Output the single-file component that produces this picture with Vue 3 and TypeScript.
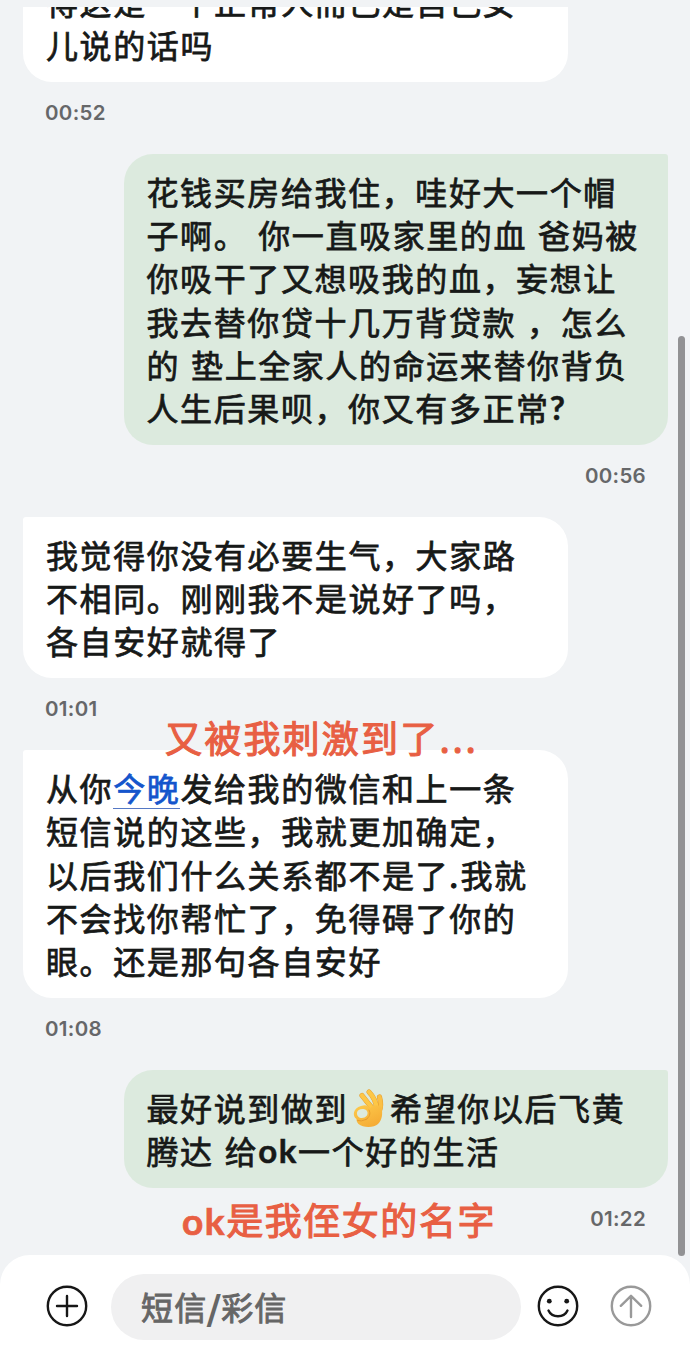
<script setup lang="ts">
interface Part {
  text?: string
  kind?: 'link' | 'latin' | 'stop' | 'emoji'
}
interface Message {
  side: 'in' | 'out'
  time: string
  lines: Part[][]
  cut?: boolean
}

const plain = (...rows: string[]): Part[][] => rows.map((text) => [{ text }])

const messages: Message[] = [
  {
    side: 'in',
    time: '00:52',
    cut: true,
    lines: plain('得这是一个正常人而已是自己女', '儿说的话吗'),
  },
  {
    side: 'out',
    time: '00:56',
    lines: [
      ...plain(
        '花钱买房给我住，哇好大一个帽',
        '子啊。 你一直吸家里的血 爸妈被',
        '你吸干了又想吸我的血，妄想让',
        '我去替你贷十几万背贷款 ，怎么',
        '的 垫上全家人的命运来替你背负',
      ),
      [{ text: '人生后果呗，你又有多正常' }, { text: '?', kind: 'latin' }],
    ],
  },
  {
    side: 'in',
    time: '01:01',
    lines: plain('我觉得你没有必要生气，大家路', '不相同。刚刚我不是说好了吗，', '各自安好就得了'),
  },
  {
    side: 'in',
    time: '01:08',
    lines: [
      [{ text: '从你' }, { text: '今晚', kind: 'link' }, { text: '发给我的微信和上一条' }],
      ...plain('短信说的这些，我就更加确定，'),
      [{ text: '以后我们什么关系都不是了' }, { text: '.', kind: 'stop' }, { text: '我就' }],
      ...plain('不会找你帮忙了，免得碍了你的', '眼。还是那句各自安好'),
    ],
  },
  {
    side: 'out',
    time: '01:22',
    lines: [
      [{ text: '最好说到做到' }, { kind: 'emoji' }, { text: '希望你以后飞黄' }],
      [{ text: '腾达 给' }, { text: 'ok', kind: 'latin' }, { text: '一个好的生活' }],
    ],
  },
]
</script>

<template>
  <div class="phone">
    <main class="thread">
      <section v-for="m in messages" :key="m.time" class="message" :class="[m.side, { cut: m.cut }]">
        <div class="bubble">
          <div v-for="(line, i) in m.lines" :key="i" class="line">
            <template v-for="(p, j) in line" :key="j">
              <svg v-if="p.kind === 'emoji'" class="emoji" viewBox="0 0 42 40">
                <defs>
                  <linearGradient id="skin" x1="0" y1="0" x2="0.6" y2="1">
                    <stop offset="0" stop-color="#fdcb4c" />
                    <stop offset="1" stop-color="#f5ac35" />
                  </linearGradient>
                </defs>
                <g fill="none" stroke-linecap="round" stroke-linejoin="round">
                  <path d="M31 24Q34 18 31.5 9" stroke="#e5a033" stroke-width="5.2" />
                  <path d="M31 24Q34 18 31.5 9" stroke="#fbc044" stroke-width="4.2" />
                  <path d="M29 22Q28 11 21 4" stroke="#e5a033" stroke-width="5.2" />
                  <path d="M29 22Q28 11 21 4" stroke="#fdc746" stroke-width="4.2" />
                  <path d="M25 21Q19 14 14 7.5" stroke="#e5a033" stroke-width="5.2" />
                  <path d="M25 21Q19 14 14 7.5" stroke="#fdc746" stroke-width="4.2" />
                </g>
                <path
                  fill="url(#skin)"
                  fill-rule="evenodd"
                  d="M13 18C18 16 20 18 22 20Q27 15 33.5 19C35 26 34 32 30 36C26 40 15 40 10.5 36C8.5 34 8.5 32 8.5 31C4 28 5 20 13 18ZM9 24.5C8.5 29 12.5 31 16.5 29.5C21 27.5 20.5 21.5 15.5 21C12 20.7 9.5 22 9 24.5Z"
                />
                <path d="M21 22C23 25.5 21.5 29.5 18 31.5M9.5 32.5Q13 34 18 31.5" fill="none" stroke="#e3972d" stroke-width="0.9" stroke-linecap="round" />
              </svg>
              <span v-else :class="p.kind">{{ p.text }}</span>
            </template>
          </div>
        </div>
        <time class="time">{{ m.time }}</time>
      </section>
    </main>

    <p class="note note-upper">又被我刺激到了<span class="dots">...</span></p>
    <p class="note note-lower"><span class="note-latin">ok</span>是我侄女的名字</p>
    <div class="scrollbar"></div>

    <footer class="composer">
      <svg class="icon add" viewBox="0 0 42 42">
        <circle cx="21" cy="21" r="19.2" />
        <path d="M21 11V31M11 21H31" />
      </svg>
      <div class="field">短信<span class="slash">/</span>彩信</div>
      <svg class="icon smile" viewBox="0 0 42 42">
        <circle cx="21" cy="21" r="19.2" />
        <circle class="eye" cx="12.3" cy="16.2" r="2.4" />
        <circle class="eye" cx="29.7" cy="16.2" r="2.4" />
        <path d="M11.5 25.5C15 33.2 27 33.2 30.5 25.5" />
      </svg>
      <svg class="icon send" viewBox="0 0 42 42">
        <circle cx="21" cy="21" r="19.2" />
        <path d="M21 32V11M10.8 20.8L21 10.8L31.2 20.8" />
      </svg>
    </footer>
  </div>
</template>

<style>
body {
  margin: 0;
  background: #f1f3f5;
}
</style>

<style scoped>
.phone {
  position: relative;
  display: flex;
  flex-direction: column;
  width: 690px;
  height: 1358px;
  overflow: hidden;
  background: #f1f3f5;
  color: #171918;
  font-family: 'Noto Sans CJK SC', sans-serif;
}
.thread {
  height: 1248px;
  flex: none;
  padding: 7px 22px 0 23px;
}
.message {
  display: flex;
  flex-direction: column;
  align-items: flex-start;
}
.message.out {
  align-items: flex-end;
}
.bubble {
  box-sizing: border-box;
  width: 544.5px;
  padding: 15.8px 23px;
  border-radius: 3px 29px 29px 29px;
  background: #fff;
}
.out .bubble {
  border-radius: 29px 3px 29px 29px;
  background: #dceade;
}
.cut .bubble {
  display: flex;
  flex-direction: column;
  justify-content: flex-end;
  height: 75px;
  overflow: hidden;
  border-radius: 0 0 29px 29px;
}
.line {
  display: flex;
  flex: none;
  height: 43.2px;
  line-height: 43px;
  font-size: 32px;
  letter-spacing: 1.6px;
  word-spacing: 2.2px;
  white-space: pre;
  -webkit-text-stroke: 0.75px currentColor;
}
.link {
  height: 42px;
  border-bottom: 1.5px solid #5578c4;
  color: #1455cc;
}
.latin {
  font-family: Lato, 'Noto Sans CJK SC', sans-serif;
  font-size: 33px;
  font-weight: 700;
  -webkit-text-stroke: 0.5px currentColor;
}
.stop {
  width: 11.2px;
  -webkit-text-stroke: 1.3px currentColor;
}
.emoji {
  width: 42px;
  height: 40px;
  margin-top: 2px;
}
.time {
  height: 72.2px;
  padding: 0 22px;
  color: #666769;
  font: 600 20.5px/61.5px Inter, sans-serif;
  letter-spacing: 0.3px;
}
.note {
  position: absolute;
  margin: 0;
  color: #e85f43;
  font-size: 37px;
  line-height: 50px;
  letter-spacing: 2.2px;
  white-space: nowrap;
  -webkit-text-stroke: 1.1px currentColor;
}
.note-upper {
  left: 165px;
  top: 712px;
}
.note-lower {
  left: 182px;
  top: 1194px;
  letter-spacing: 1.55px;
}
.note-latin {
  font-family: Lato, sans-serif;
  font-weight: 700;
  -webkit-text-stroke: 0.7px currentColor;
}
.dots {
  letter-spacing: 2.7px;
}
.scrollbar {
  position: absolute;
  left: 678px;
  top: 336px;
  width: 7px;
  height: 920px;
  border-radius: 4px;
  background: #929294;
}
.composer {
  display: flex;
  box-sizing: border-box;
  height: 103px;
  align-items: flex-start;
  padding: 19px 0 0 46px;
  border-radius: 30px 30px 0 0;
  background: #fff;
}
.icon {
  width: 42px;
  height: 42px;
  margin-top: 11px;
  fill: none;
  stroke: #171717;
  stroke-width: 2.4;
  stroke-linecap: round;
  stroke-linejoin: round;
}
.icon .eye {
  fill: #171717;
  stroke: none;
}
.add {
  margin-left: -0.5px;
}
.field {
  box-sizing: border-box;
  width: 410px;
  height: 66px;
  margin-left: 23.5px;
  padding-left: 30px;
  border-radius: 33px;
  background: #f0f0f1;
  color: #666;
  font-size: 32px;
  line-height: 65px;
  letter-spacing: 1.2px;
  -webkit-text-stroke: 0.9px currentColor;
}
.slash {
  -webkit-text-stroke: 1.8px currentColor;
}
.smile {
  margin-left: 16px;
}
.send {
  margin-left: 31px;
  stroke: #999;
}
</style>
